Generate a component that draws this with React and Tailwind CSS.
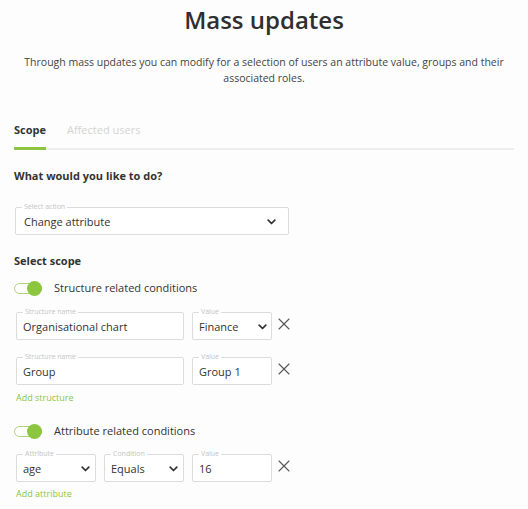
import React from 'react';

const green = '#8cc63f';

const Chevron = () => (
  <svg width="9" height="6" viewBox="0 0 9 6" className="shrink-0">
    <path d="M1.2 1.2 L4.5 4.5 L7.8 1.2" fill="none" stroke="#333" strokeWidth="1.7" strokeLinecap="round" strokeLinejoin="round" />
  </svg>
);

const Cross = () => (
  <svg width="12" height="12" viewBox="0 0 12 12" className="shrink-0 ml-[-2px]">
    <path d="M1 1 L11 11 M11 1 L1 11" stroke="#555" strokeWidth="1.1" strokeLinecap="round" />
  </svg>
);

const Field = ({ label, value, width, select, chevronPad = 'pr-[4px]', textPad = 'pl-[0px]' }) => (
  <fieldset className={`${width} border border-[#dcdcdc] rounded-[2px] bg-white pl-[6px] ${chevronPad} shrink-0`}>
    <legend className="px-[2px] text-[7px] leading-[8px] text-[#c4c4c4]">{label}</legend>
    <div className={`flex items-center justify-between leading-[22px] text-[11px] text-[#333] pb-[1px] ${textPad}`}>
      <span>{value}</span>
      {select && <Chevron />}
    </div>
  </fieldset>
);

const Toggle = ({ label, className }) => (
  <div className={`flex items-center h-[16px] ${className}`}>
    <div className="relative w-[28px] h-[11px] rounded-full border border-[#a9d57a] bg-white">
      <div className="absolute right-[-1px] top-[-3px] w-[15px] h-[15px] rounded-full bg-[#8cc63f]" />
    </div>
    <span className="ml-[12px] text-[11px] text-[#333]">{label}</span>
  </div>
);

const App = () => {
  return (
    <div className="w-[528px] h-[509px] overflow-hidden bg-[#fdfdfd] px-[14px]" style={{ fontFamily: '"Open Sans", sans-serif' }}>
      <h1 className="text-center text-[24px] leading-[40px] font-semibold text-[#2f2f2f]">Mass updates</h1>
      <p className="mt-[14px] -mx-[8px] text-center text-[10.5px] leading-[16px] text-[#444]">
        Through mass updates you can modify for a selection of users an attribute value, groups and their associated roles.
      </p>

      <div className="mt-[36px] flex border-b-2 border-[#eeeeee] w-[500px]">
        <div className="text-[11px] leading-[16px] font-bold text-[#333] pb-[9px] border-b-[3px] border-[#8cc63f] -mb-[2px]">Scope</div>
        <div className="ml-[21px] text-[11px] leading-[16px] text-[#d4d4d4]">Affected users</div>
      </div>

      <div className="mt-[18px] text-[11px] leading-[16px] font-bold text-[#333]">What would you like to do?</div>

      <div className="mt-[19px] ml-[1px] flex">
        <Field label="Select action" value="Change attribute" width="w-[274px]" select chevronPad="pr-[12px]" textPad="pl-[2px]" />
      </div>

      <div className="mt-[18px] text-[11px] leading-[16px] font-bold text-[#333]">Select scope</div>

      <Toggle label="Structure related conditions" className="mt-[11px]" />

      <div className="mt-[12px] ml-[2px] flex items-center gap-[8px]">
        <Field label="Structure name" value="Organisational chart" width="w-[168px]" />
        <Field label="Value" value="Finance" width="w-[80px]" select />
        <Cross />
      </div>

      <div className="mt-[13px] ml-[2px] flex items-center gap-[8px]">
        <Field label="Structure name" value="Group" width="w-[168px]" />
        <Field label="Value" value="Group 1" width="w-[80px]" />
        <Cross />
      </div>

      <div className="mt-[6px] ml-[2px] text-[9px] leading-[14px]" style={{ color: green }}>Add structure</div>

      <Toggle label="Attribute related conditions" className="mt-[18px]" />

      <div className="mt-[11px] ml-[2px] flex items-center gap-[8px]">
        <Field label="Attribute" value="age" width="w-[80px]" select chevronPad="pr-[5px]" />
        <Field label="Condition" value="Equals" width="w-[80px]" select chevronPad="pr-[5px]" />
        <Field label="Value" value="16" width="w-[80px]" />
        <Cross />
      </div>

      <div className="mt-[5px] ml-[2px] text-[9px] leading-[14px]" style={{ color: green }}>Add attribute</div>
    </div>
  );
};

export default App;
